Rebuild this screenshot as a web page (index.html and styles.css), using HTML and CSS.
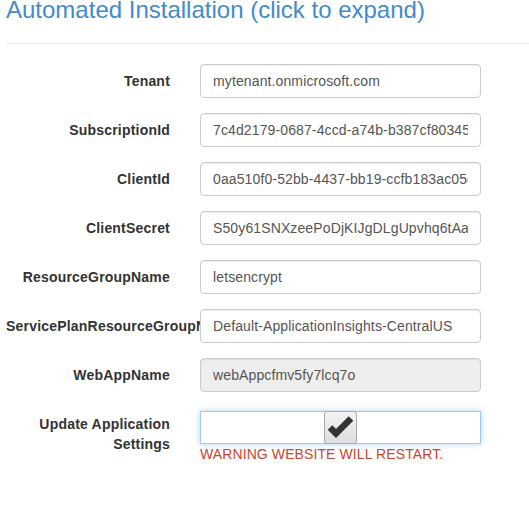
FILE: index.html
```html
<!DOCTYPE html>
<html lang="en">
<head>
<meta charset="utf-8">
<title>Automated Installation</title>
<link rel="stylesheet" href="styles.css">
</head>
<body>
<div class="page">
  <h3 class="title">Automated Installation (click to expand)</h3>
  <hr class="rule">
  <form class="form">
    <div class="group">
      <label class="label">Tenant</label>
      <div class="control"><input class="field" type="text" value="mytenant.onmicrosoft.com"></div>
    </div>
    <div class="group">
      <label class="label">SubscriptionId</label>
      <div class="control"><input class="field" type="text" value="7c4d2179-0687-4ccd-a74b-b387cf80345e"></div>
    </div>
    <div class="group">
      <label class="label">ClientId</label>
      <div class="control"><input class="field" type="text" value="0aa510f0-52bb-4437-bb19-ccfb183ac05d"></div>
    </div>
    <div class="group">
      <label class="label">ClientSecret</label>
      <div class="control"><input class="field" type="text" value="S50y61SNXzeePoDjKIJgDLgUpvhq6tAaW3"></div>
    </div>
    <div class="group">
      <label class="label">ResourceGroupName</label>
      <div class="control"><input class="field" type="text" value="letsencrypt"></div>
    </div>
    <div class="group">
      <label class="label">ServicePlanResourceGroupName</label>
      <div class="control"><input class="field" type="text" value="Default-ApplicationInsights-CentralUS"></div>
    </div>
    <div class="group">
      <label class="label">WebAppName</label>
      <div class="control"><input class="field" type="text" value="webAppcfmv5fy7lcq7o" disabled></div>
    </div>
    <div class="group">
      <label class="label">Update Application Settings</label>
      <div class="control">
        <div class="checkwrap">
          <span class="checkbox">
            <svg width="33" height="33" viewBox="0 0 33 33" aria-hidden="true">
              <polyline points="6,16.5 12,22.5 27,7.5" fill="none" stroke="#333" stroke-width="6.5" stroke-linejoin="miter" stroke-linecap="butt"/>
            </svg>
          </span>
        </div>
        <div class="warning">WARNING WEBSITE WILL RESTART.</div>
      </div>
    </div>
  </form>
</div>
</body>
</html>
```

FILE: styles.css
```css
html, body {
  margin: 0;
  padding: 0;
  background: #fff;
}
body {
  font-family: "Liberation Sans", Arial, Helvetica, sans-serif;
  font-size: 14px;
  line-height: 20px;
  color: #333;
}
.page {
  padding-left: 6px;
}
.title {
  margin: -3px 0 0;
  font-size: 24px;
  line-height: 26px;
  font-weight: normal;
  color: #428bca;
}
.rule {
  margin: 20px 0 20px;
  border: 0;
  border-top: 1px solid #eee;
  height: 0;
}
.form {
  margin: 0;
}
.group {
  display: flex;
  margin-bottom: 15px;
}
.label {
  flex: 0 0 auto;
  box-sizing: border-box;
  width: 194px;
  padding: 7px 30px 0 0;
  text-align: right;
  font-weight: bold;
  letter-spacing: 0.2px;
  overflow: hidden;
  white-space: normal;
}
.control {
  flex: 0 0 auto;
  width: 281px;
}
.field {
  display: block;
  box-sizing: border-box;
  width: 281px;
  height: 34px;
  margin: 0;
  padding: 6px 12px;
  font-family: "Liberation Sans", Arial, Helvetica, sans-serif;
  font-size: 14px;
  line-height: 20px;
  letter-spacing: 0.12px;
  color: #555;
  background: #fff;
  border: 1px solid #ccc;
  border-radius: 4px;
  box-shadow: inset 0 1px 1px rgba(0, 0, 0, 0.075);
  outline: none;
}
.field:disabled {
  background: #eee;
  color: #555;
  opacity: 1;
}
.checkwrap {
  box-sizing: border-box;
  margin-top: 4px;
  height: 33px;
  border: 1px solid #9fcbee;
  box-shadow: 0 0 6px rgba(102, 175, 233, 0.55);
  background: #fff;
  display: flex;
  justify-content: center;
}
.checkbox {
  box-sizing: border-box;
  width: 33px;
  height: 33px;
  margin-top: -1px;
  border: 1px solid #a9a9a9;
  border-radius: 3px;
  background: linear-gradient(#f4f4f4, #dedede);
  display: flex;
  align-items: center;
  justify-content: center;
}
.checkbox svg {
  display: block;
  margin: -1px;
}
.warning {
  color: #c9472f;
  font-size: 14px;
  line-height: 20px;
  letter-spacing: 0.1px;
}
```
